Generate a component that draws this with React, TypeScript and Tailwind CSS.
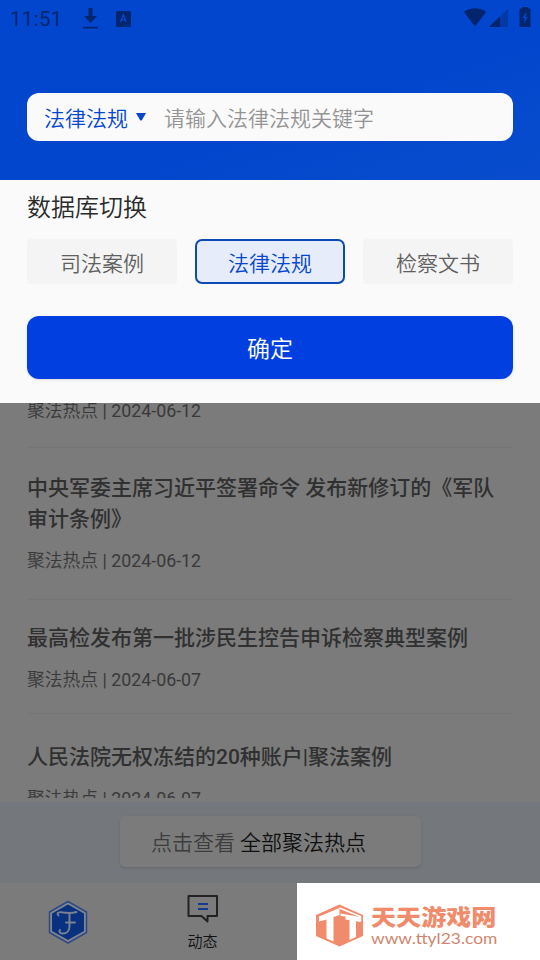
const databases = ['司法案例', '法律法规', '检察文书']

const articles = [
  {
    title: '中央军委主席习近平签署命令 发布新修订的《军队审计条例》',
    date: '2024-06-12',
    box: 'h-[152px] pt-[25px] pb-[24px]',
  },
  { title: '最高检发布第一批涉民生控告申诉检察典型案例', date: '2024-06-07', box: 'h-[114px] pt-[23px] pb-[19px]' },
  { title: '人民法院无权冻结的20种账户|聚法案例', date: '2024-06-07', box: 'h-[120px] pt-[28px] pb-[20px]' },
]

function StatusBar() {
  return (
    <div className="flex h-[37px] items-center justify-between pl-[10px] pr-[9px] text-[#02256d]">
      <div className="flex items-center">
        <span className="w-[53px] pt-[2px] text-[20.5px] leading-[35px] tracking-[0.3px]">11:51</span>
        <svg className="ml-[19px] h-[22px] w-[17px]" viewBox="0 0 17 22" fill="currentColor">
          <path d="M6.500 0h4v8h4.500l-6.500 7L2 8h4.500z" />
          <path d="M1 18.800h15v1.700H1z" />
        </svg>
        <svg className="ml-[17px] h-[16px] w-[15px]" viewBox="0 0 15 16">
          <rect width="15" height="16" rx="1.5" fill="currentColor" />
          <path d="M4.500 11 7.300 4l2.800 7M5.400 8.800h3.800" fill="none" stroke="#0246cd" strokeWidth="1.500" />
          <path d="M8 14h1M10.500 14h1M13 14h1" stroke="#0246cd" />
        </svg>
      </div>
      <div className="flex items-center">
        <svg className="mb-[2px] h-[19px] w-[22px]" viewBox="0 0 22 19" fill="currentColor">
          <path d="M0 4C6-1 16-1 22 4L11 18.500z" />
        </svg>
        <svg className="ml-[3px] h-[19px] w-[19px]" viewBox="0 0 19 19" fill="currentColor">
          <path d="M0 18 19 0v18z" opacity=".4" />
          <path d="M0 18 11 7.500V18z" />
        </svg>
        <svg className="mb-[3px] ml-[11px] h-[20px] w-[12px]" viewBox="0 0 12 20">
          <path d="M3 0h6v1.500h1.500q1 0 1 1V19q0 1-1 1h-9q-1 0-1-1V2.500q0-1 1-1H3z" fill="currentColor" />
          <path d="M7.500 4.500 3.300 11h2.200L4.800 16.500 8.800 10H6.500z" fill="#0246cd" />
        </svg>
      </div>
    </div>
  )
}

function HomeLogo() {
  return (
    <svg className="h-[44px] w-[40px]" viewBox="0 0 40 44">
      <path d="M20 1.500 38.500 12v20.500L20 43 1.500 32.500V12z" fill="#83868c" stroke="#2d4a85" strokeWidth="1.500" strokeLinejoin="round" />
      <path d="M20 4.500 36 13.500v17.500L20 40 4 31V13.500z" fill="#0a3180" />
      <path d="M10.500 15.500c-2.500-3 .5-4 5-3 5 .8 8 .8 13-.5M21.500 13v13c0 5-3 7.500-6.500 7.500-3 0-4.500-2-3-3.500M18 22.500h9" fill="none" stroke="#7b8290" strokeWidth="1.900" strokeLinecap="round" />
    </svg>
  )
}

function Watermark() {
  return (
    <div className="absolute right-0 bottom-0 flex h-[77px] w-[243px] items-center bg-white pt-[8px] pl-[18px]">
      <svg className="h-[43px] w-[49px] shrink-0" viewBox="0 0 49 43">
        <path d="M24.500 0.500 48 11V32L24.500 42.500 1 32V11z" fill="#f08b6c" />
        {/* left T */}
        <path d="M4 12.500 24.500 4V11L18.500 13V37.500L11.500 34.500V15.500L4 17.500z" fill="#fff" />
        {/* right T */}
        <path d="M25.500 9.500 45.500 13V18L41 17.300V33L34.500 36V16.200L30.500 15.500V12.500L25.500 12z" fill="#fff" />
        <path d="M24.500 4 45.500 12.500v5" fill="none" stroke="#fff" strokeWidth="1.500" />
      </svg>
      <div className="ml-[7px] text-[#f08b6c]">
        <p className="w-[110px] origin-left scale-x-[1.14] pb-[1px] text-[22px] leading-[23px] font-black whitespace-nowrap">天天游戏网</p>
        <p className="w-[104px] origin-left scale-x-[1.16] font-['Lato'] text-[15px] leading-[16px] whitespace-nowrap text-[#cf8670]">www.ttyl23.com</p>
      </div>
    </div>
  )
}

export default function App() {
  return (
    <div className="relative flex h-[960px] w-[540px] flex-col overflow-hidden bg-[#7b7b7b] font-['Roboto','Noto_Sans_CJK_SC',sans-serif]">
      {/* Search header */}
      <header className="h-[180px] shrink-0 bg-linear-to-br from-[#0246cd] from-60% to-[#094ccd]">
        <StatusBar />
        <div className="mx-[27px] mt-[56px] flex h-[48px] items-center rounded-[12px] bg-[#fafafa] pl-[17px] text-[21px] font-[350]">
          <span className="pt-[5px] text-[#0246cd]">法律法规</span>
          <svg className="ml-[8px] h-[8px] w-[10px]" viewBox="0 0 10 8" fill="#0246cd">
            <path d="M0 0h10L6 7q-1 1-2 0z" />
          </svg>
          <span className="ml-[18px] pt-[5px] text-[#949494]">请输入法律法规关键字</span>
        </div>
      </header>

      {/* Database switch */}
      <section className="h-[223px] shrink-0 bg-[#fafafa] px-[27px] pt-[10px]">
        <h2 className="text-[24px] leading-[36px] font-[350] text-[#2b2b2b]">数据库切换</h2>
        <div className="mt-[13px] grid grid-cols-3 gap-[18px]">
          {databases.map((name) => (
            <button
              key={name}
              className={
                name === '法律法规'
                  ? 'h-[45px] rounded-[7px] border-2 border-[#0b49b4] bg-[#e6ecfa] pt-[6px] text-[21px] font-[350] text-[#0246cd]'
                  : 'h-[45px] rounded-[4px] bg-[#f4f4f4] pt-[6px] text-[21px] font-[350] text-[#606060]'
              }
            >
              {name}
            </button>
          ))}
        </div>
        <button className="mt-[32px] h-[63px] w-full rounded-[12px] bg-[#023fe0] pt-[5px] text-[23px] font-[350] text-white shadow-sm">确定</button>
      </section>

      {/* News list */}
      <main className="h-[395px] shrink-0 overflow-hidden px-[27px] text-[#303030]">
        <div className="flow-root h-[45px] border-b border-[#757575]">
          <p className="mt-[-6px] text-[17.8px] leading-[28px] text-[#393939]">
            <span className="font-[350]">聚法热点</span> | 2024-06-12
          </p>
        </div>
        {articles.map((item) => (
          <article key={item.title} className={`${item.box} flex flex-col justify-between border-b border-[#757575]`}>
            <h3 className="text-[21px] leading-[31px] font-medium">{item.title}</h3>
            <p className="text-[17.8px] leading-[28px] text-[#393939]">
              <span className="font-[350]">聚法热点</span> | {item.date}
            </p>
          </article>
        ))}
      </main>

      <div className="mt-[4px] flex h-[81px] shrink-0 justify-center bg-[#74777c] pt-[14px]">
        <button className="h-[51px] w-[301px] rounded-[5px] bg-[#7b7b7b] pt-[5px] pr-[23px] text-[21px] font-[350] text-[#3c3c3c] shadow">
          点击查看 <span className="text-[#0f0f0f]">全部聚法热点</span>
        </button>
      </div>

      {/* Tab bar */}
      <nav className="grid flex-1 grid-cols-4">
        <div className="flex justify-center pt-[17px]">
          <HomeLogo />
        </div>
        <div className="flex flex-col items-center pt-[11px]">
          <svg className="h-[30px] w-[32px]" viewBox="0 0 32 30" fill="none">
            <path d="M1.500 2h28.500v20H20.500v5.500L14.500 22H1.500z" stroke="#222" strokeWidth="2" strokeLinejoin="round" />
            <path d="M11 10h10M11 15h10" stroke="#123a91" strokeWidth="2.200" />
          </svg>
          <span className="mt-[7px] text-[15px] leading-[22px] font-[350] text-[#111]">动态</span>
        </div>
      </nav>
      <Watermark />
    </div>
  )
}
